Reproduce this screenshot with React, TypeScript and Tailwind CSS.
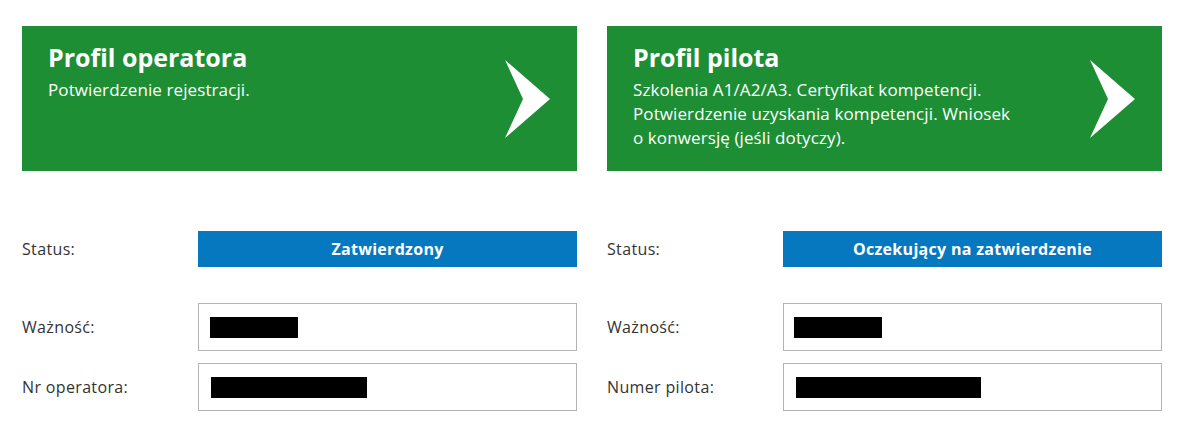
import React from "react";

const Arrow = () => (
  <svg width="46" height="79" viewBox="0 0 46 79" className="shrink-0">
    <polygon points="0,0 45,39 0,78 18,39" fill="#ffffff" />
  </svg>
);

type Row = { label: string; bar: number; barX: number };

const Column = ({
  title,
  lines,
  status,
  rows,
}: {
  title: string;
  lines: string[];
  status: string;
  rows: Row[];
}) => (
  <div className="flex w-[555px] flex-col">
    <div className="flex h-[145px] items-start justify-between bg-[#1e8e35] pl-[26px] pr-[26px] pt-[16px]">
      <div className="flex flex-col text-white">
        <div className="text-[25px] font-bold leading-[31px]">{title}</div>
        <div className="mt-[5px] text-[17px] leading-[24px] tracking-[0.1px]">
          {lines.map((l, i) => (
            <div key={i}>{l}</div>
          ))}
        </div>
      </div>
      <div className="mt-[18px]">
        <Arrow />
      </div>
    </div>
    <div className="mt-[60px] flex items-center">
      <div className="w-[176px] text-[16px] tracking-[0.35px] text-[#333]">Status:</div>
      <div className="flex h-[36px] flex-1 items-center justify-center bg-[#0678bf] text-[16px] font-bold tracking-[0.3px] text-white">
        {status}
      </div>
    </div>
    <div className="mt-[36px] flex flex-col gap-[12px]">
      {rows.map((r, i) => (
        <div key={i} className="flex items-center">
          <div className="w-[176px] text-[16px] tracking-[0.35px] text-[#333]">{r.label}</div>
          <div className="flex h-[48px] flex-1 items-center border border-[#b3b3b3]">
            <div className="h-[21px] bg-black" style={{ width: r.bar, marginLeft: r.barX }} />
          </div>
        </div>
      ))}
    </div>
  </div>
);

export default function App() {
  return (
    <div
      className="flex h-[436px] w-[1187px] gap-[30px] bg-white pl-[22px] pt-[26px]"
      style={{ fontFamily: '"Open Sans", "Noto Sans", sans-serif' }}
    >
      <Column
        title="Profil operatora"
        lines={["Potwierdzenie rejestracji."]}
        status="Zatwierdzony"
        rows={[
          { label: "Ważność:", bar: 88, barX: 11 },
          { label: "Nr operatora:", bar: 156, barX: 12 },
        ]}
      />
      <Column
        title="Profil pilota"
        lines={[
          "Szkolenia A1/A2/A3. Certyfikat kompetencji.",
          "Potwierdzenie uzyskania kompetencji. Wniosek",
          "o konwersję (jeśli dotyczy).",
        ]}
        status="Oczekujący na zatwierdzenie"
        rows={[
          { label: "Ważność:", bar: 88, barX: 10 },
          { label: "Numer pilota:", bar: 185, barX: 12 },
        ]}
      />
    </div>
  );
}
